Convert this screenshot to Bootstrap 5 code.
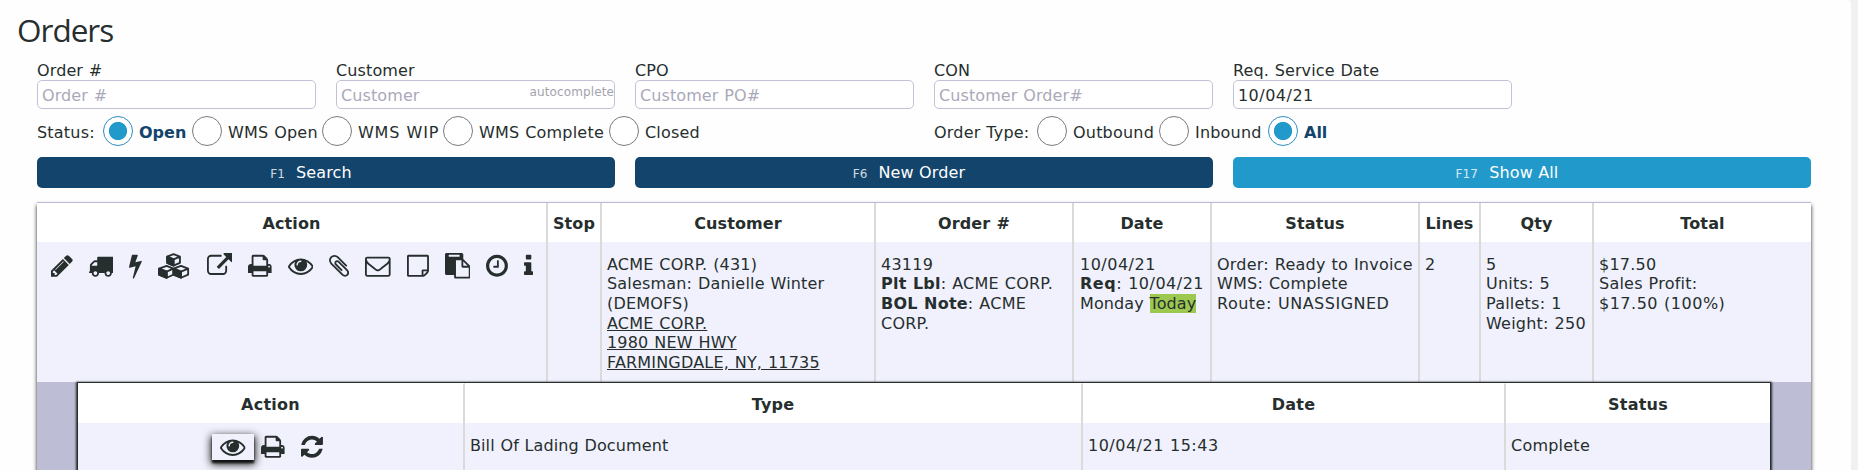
<!DOCTYPE html>
<html lang="en">
<head>
<meta charset="utf-8">
<title>Orders</title>
<link rel="stylesheet" href="https://cdn.jsdelivr.net/npm/bootstrap@5.3.0/dist/css/bootstrap.min.css">
<style>
html,body{height:470px;overflow:hidden}
body{background:#f1f0f3;color:#262e2e;font:16px/20px "DejaVu Sans",Verdana,sans-serif;word-spacing:.55px;letter-spacing:.12px}
.page{width:1851px;height:470px;background:#fefefe;padding:11px 40px 0 37px;border-top-right-radius:3px;overflow:hidden}
h1{font:400 31.5px/38px "Open Sans","Segoe UI",sans-serif;margin:0 0 12px -20px;letter-spacing:-1px}
.filters{--bs-gutter-x:20px}
.filters label.cap{display:block;height:19px;line-height:19px}
.form-control{height:29px;padding:1px 4px 0;border:1px solid #c3c1d6;border-radius:5px;font-size:16px;line-height:26px;color:#262e2e;background:#fff;word-spacing:.55px;letter-spacing:.1px}
.form-control::placeholder{color:#a9a9b9}
.hint{position:absolute;right:11px;top:23px;font-size:12px;line-height:16px;letter-spacing:.12px;color:#a3a3ad}
.choices{height:30px;margin-top:7px;letter-spacing:.2px}
.choices>*{flex:none;white-space:nowrap}
.choices span{padding-top:4px}
.choices .form-check-input{width:30px;height:30px;margin:0 6px 0 0;border:1px solid #777b80;background:#fff}
.choices .form-check-input:checked{border-color:#2e8cc0;background:radial-gradient(circle,#2299cb 8.7px,#fff 9.5px)}
.choices .form-check-input:checked+span{font-weight:700;color:#13446c;letter-spacing:0}
.btn-key{height:31px;width:100%;padding:1px 30px 0 0;border:0;border-radius:5px;color:#fff;background:#13446c;font-size:16px;line-height:30px;letter-spacing:.15px}
.btn-key.alt{background:#2299cb}
.btn-key kbd{all:unset;font-size:12px;margin-right:11px;opacity:.8}
.grid{table-layout:fixed;border-collapse:separate;border-spacing:0;margin:0}
.grid th{height:39px;padding:2px 0 0;text-align:center;background:#fff;border-right:2px solid #dadada;vertical-align:middle}
.grid td{background:#f0f1fc;border-right:2px solid #dadada;padding:12.5px 0 0 5px;vertical-align:top;line-height:19.7px;white-space:nowrap;letter-spacing:.23px}
.grid th:last-child,.grid td:last-child{border-right:0}
.outer{width:1774px;margin-top:14px;border-top:1px solid #b9b9d9;box-shadow:0 3px 4px #222}
.outer .main>td{height:140px}
.outer .main>.cust{padding-left:4px;letter-spacing:.18px}
.outer td.nest{background:#bdbed6;padding:1px 41px 0}
.inner{width:1692px;box-shadow:0 0 0 1px #262e2e,0 1px 2px 2px #262e2e}
.inner th{height:40px;padding:2px 0 0;border-top:1px solid #fff}
.inner td{height:80px}
td.acts{padding-left:6px!important;padding-top:11px!important}
.ico{display:inline-flex;padding:0 7.95px;height:25.6px}
.ico svg{height:25.6px;width:auto;fill:#262e2e;display:block}
.lift{box-shadow:0 3px 8px 1px #111,0 3px 2px #222}
.today{background:#9cc850;padding:0}
.num,.grid td.num{letter-spacing:.5px}
</style>
</head>
<body>
<svg width="0" height="0" class="position-absolute" aria-hidden="true">
<symbol id="i-eye" viewBox="0 0 1792 1792"><path d="M1664 960q-152-236-381-353 61 104 61 225 0 185-131.5 316.5t-316.5 131.5-316.5-131.5-131.5-316.5q0-121 61-225-229 117-381 353 133 205 333.5 326.5t434.5 121.5 434.5-121.5 333.5-326.5zm-720-384q0-20-14-34t-34-14q-125 0-214.5 89.5t-89.5 214.5q0 20 14 34t34 14 34-14 14-34q0-86 61-147t147-61q20 0 34-14t14-34zm848 384q0 34-20 69-140 230-376.5 368.5t-499.5 138.5-499.5-139-376.5-368q-20-35-20-69t20-69q140-229 376.5-368t499.5-139 499.5 139 376.5 368q20 35 20 69z"/></symbol>
<symbol id="i-print" viewBox="64 0 1664 1792"><path d="M448 1536h896v-256h-896v256zm0-640h896v-384h-160q-40 0-68-28t-28-68v-160h-640v640zm1152 64q0-26-19-45t-45-19-45 19-19 45 19 45 45 19 45-19 19-45zm128 0v416q0 13-9.5 22.5t-22.5 9.5h-224v160q0 40-28 68t-68 28h-960q-40 0-68-28t-28-68v-160h-224q-13 0-22.5-9.5t-9.5-22.5v-416q0-79 56.5-135.5t135.5-56.5h64v-544q0-40 28-68t68-28h672q40 0 88 20t76 48l152 152q28 28 48 76t20 88v256h64q79 0 135.5 56.5t56.5 135.5z"/></symbol>
</svg>
<main class="page">
<h1>Orders</h1>
<div class="row filters">
  <div class="col-2"><label class="cap">Order #</label><input class="form-control" placeholder="Order #"></div>
  <div class="col-2 position-relative"><label class="cap">Customer</label><input class="form-control" placeholder="Customer"><span class="hint">autocomplete</span></div>
  <div class="col-2"><label class="cap">CPO</label><input class="form-control" placeholder="Customer PO#"></div>
  <div class="col-2"><label class="cap">CON</label><input class="form-control" placeholder="Customer Order#"></div>
  <div class="col-2"><label class="cap">Req. Service Date</label><input class="form-control num" value="10/04/21"></div>
</div>
<div class="row filters">
  <div class="col-6"><div class="choices d-flex align-items-center">
    <span style="width:66px">Status:</span>
    <input class="form-check-input" type="radio" name="s" checked><span style="width:53px">Open</span>
    <input class="form-check-input" type="radio" name="s"><span style="width:94px">WMS Open</span>
    <input class="form-check-input" type="radio" name="s"><span style="width:85px;letter-spacing:.8px">WMS WIP</span>
    <input class="form-check-input" type="radio" name="s"><span style="width:130px">WMS Complete</span>
    <input class="form-check-input" type="radio" name="s"><span>Closed</span>
  </div></div>
  <div class="col-6"><div class="choices d-flex align-items-center">
    <span style="width:103px">Order Type:</span>
    <input class="form-check-input" type="radio" name="t"><span style="width:86px">Outbound</span>
    <input class="form-check-input" type="radio" name="t"><span style="width:73px">Inbound</span>
    <input class="form-check-input" type="radio" name="t" checked><span>All</span>
  </div></div>
</div>
<div class="row filters" style="margin-top:11px">
  <div class="col-4"><button class="btn btn-key"><kbd>F1</kbd>Search</button></div>
  <div class="col-4"><button class="btn btn-key"><kbd>F6</kbd>New Order</button></div>
  <div class="col-4"><button class="btn btn-key alt"><kbd>F17</kbd>Show All</button></div>
</div>
<table class="grid outer">
<colgroup><col style="width:511px"><col style="width:54px"><col style="width:274px"><col style="width:198px"><col style="width:138px"><col style="width:208px"><col style="width:61px"><col style="width:113px"><col style="width:217px"></colgroup>
<thead><tr><th>Action</th><th>Stop</th><th>Customer</th><th>Order #</th><th>Date</th><th>Status</th><th>Lines</th><th>Qty</th><th>Total</th></tr></thead>
<tbody>
<tr class="main">
<td class="acts"><div class="d-flex">
<span class="ico"><svg viewBox="128 0 1536 1792"><path d="M491 1536l91-91-235-235-91 91v107h128v128h107zm523-928q0-22-22-22-10 0-17 7l-542 542q-7 7-7 17 0 22 22 22 10 0 17-7l542-542q7-7 7-17zm-54-192l416 416-832 832h-416v-416zm683 96q0 53-37 90l-166 166-416-416 166-165q36-38 90-38 53 0 91 38l235 234q37 39 37 91z"/></svg></span>
<span class="ico"><svg viewBox="64 0 1728 1792"><path d="M640 1408q0-52-38-90t-90-38-90 38-38 90 38 90 90 38 90-38 38-90zm-384-512h384v-256h-158q-13 0-22 9l-195 195q-9 9-9 22v30zm1280 512q0-52-38-90t-90-38-90 38-38 90 38 90 90 38 90-38 38-90zm256-1088v1024q0 15-4 26.5t-13.5 18.5-16.5 11.5-23.5 6-22.5 2-25.5 0-22.5-.5q0 106-75 181t-181 75-181-75-75-181h-384q0 106-75 181t-181 75-181-75-75-181h-64q-3 0-22.5.5t-25.5 0-22.5-2-23.5-6-16.5-11.5-13.5-18.5-4-26.5q0-26 19-45t45-19v-320q0-8-.5-35t0-38 2.5-34.5 6.5-37 14-30.5 22.5-30l198-198q19-19 50.5-32t58.5-13h160v-192q0-26 19-45t45-19h1024q26 0 45 19t19 45z"/></svg></span>
<span class="ico"><svg viewBox="448 0 896 1792"><path d="M1333 566q18 20 7 44l-540 1157q-13 25-42 25-4 0-14-2-17-5-25.5-19t-4.5-30l197-808-406 101q-4 1-12 1-18 0-31-11-18-15-13-39l201-825q4-14 16-23t28-9h328q19 0 32 12.5t13 29.5q0 8-5 18l-171 463 396-98q8-2 12-2 19 0 34 15z"/></svg></span>
<span class="ico"><svg viewBox="0 0 2304 1792"><g stroke="#262e2e" stroke-width="128" stroke-linejoin="round"><path fill="none" d="M1088 75L1536 250V690L1088 885L640 690V250ZM640 250L1088 440L1536 250M1088 440V885M608 905L1070 1100V1520L608 1735L70 1520V1100ZM70 1100L608 1300L1070 1100M608 1300V1735M1610 905L2110 1100V1520L1610 1735L1090 1520V1100ZM1090 1100L1610 1300L2110 1100M1610 1300V1735"/><path d="M640 250L1088 440V885L640 690ZM70 1100L608 1300V1735L70 1520ZM1090 1100L1610 1300V1735L1090 1520Z"/></g></svg></span>
<span class="ico"><svg viewBox="0 0 1792 1792"><path d="M1408 928v320q0 119-84.5 203.5t-203.5 84.5h-832q-119 0-203.5-84.5t-84.5-203.5v-832q0-119 84.5-203.5t203.5-84.5h704q14 0 23 9t9 23v64q0 14-9 23t-23 9h-704q-66 0-113 47t-47 113v832q0 66 47 113t113 47h832q66 0 113-47t47-113v-320q0-14 9-23t23-9h64q14 0 23 9t9 23zm384-864v512q0 26-19 45t-45 19-45-19l-176-176-652 652q-10 10-23 10t-23-10l-114-114q-10-10-10-23t10-23l652-652-176-176q-19-19-19-45t19-45 45-19h512q26 0 45 19t19 45z"/></svg></span>
<span class="ico"><svg viewBox="0 0 1664 1792"><use href="#i-print" width="1664" height="1792"/></svg></span>
<span class="ico"><svg viewBox="0 0 1792 1792"><use href="#i-eye" width="1792" height="1792"/></svg></span>
<span class="ico"><svg viewBox="192 0 1408 1792"><path d="M1596 1385q0 117-79 196t-196 79q-135 0-235-100l-777-776q-113-115-113-271 0-159 110-270t269-111q158 0 273 113l605 606q10 10 10 22 0 16-30.5 46.5t-46.5 30.5q-13 0-23-10l-606-607q-79-77-181-77-106 0-179 75t-73 181q0 105 76 181l776 777q63 63 145 63 64 0 106-42t42-106q0-82-63-145l-581-581q-26-24-60-24-29 0-48 19t-19 48q0 32 25 59l410 410q10 10 10 22 0 16-31 47t-47 31q-12 0-22-10l-410-410q-63-61-63-149 0-82 57-139t139-57q88 0 149 63l581 581q100 98 100 235z"/></svg></span>
<span class="ico"><svg viewBox="0 0 1792 1792"><path d="M1664 1504v-768q-32 36-69 66-268 206-426 338-51 43-83 67t-86.5 48.5-102.5 24.5h-2q-48 0-102.5-24.5t-86.5-48.5-83-67q-158-132-426-338-37-30-69-66v768q0 13 9.5 22.5t22.5 9.5h1472q13 0 22.5-9.5t9.5-22.5zm0-1051v-24.5l-.5-13-3-12.5-5.5-9-9-7.5-14-2.5h-1472q-13 0-22.5 9.5t-9.5 22.5q0 168 147 284 193 152 401 317 6 5 35 29.5t46 37.5 44.5 31.5 50.5 27.5 43 9h2q20 0 43-9t50.5-27.5 44.5-31.5 46-37.5 35-29.5q208-165 401-317 54-43 100.5-115.5t46.5-131.5zm128-37v1088q0 66-47 113t-113 47h-1472q-66 0-113-47t-47-113v-1088q0-66 47-113t113-47h1472q66 0 113 47t47 113z"/></svg></span>
<span class="ico"><svg viewBox="0 0 1536 1792"><path d="M1400 1280h-248v248q29-10 41-22l185-185q12-12 22-41zm-280-128h288v-896h-1280v1280h896v-288q0-40 28-68t68-28zm416-928v1024q0 40-20 88t-48 76l-184 184q-28 28-76 48t-88 20h-1024q-40 0-68-28t-28-68v-1344q0-40 28-68t68-28h1344q40 0 68 28t28 68z"/></svg></span>
<span class="ico"><svg viewBox="0 0 1792 1792"><path d="M768 1664h896v-640h-416q-40 0-68-28t-28-68v-416h-384v1152zm256-1440v-64q0-13-9.5-22.5t-22.5-9.5h-704q-13 0-22.5 9.5t-9.5 22.5v64q0 13 9.5 22.5t22.5 9.5h704q13 0 22.5-9.5t9.5-22.5zm256 672h299l-299-299v299zm512 128v672q0 40-28 68t-68 28h-960q-40 0-68-28t-28-68v-160h-544q-40 0-68-28t-28-68v-1344q0-40 28-68t68-28h1088q40 0 68 28t28 68v328q21 13 36 28l408 408q28 28 48 76t20 88z"/></svg></span>
<span class="ico"><svg viewBox="128 0 1536 1792"><path d="M1024 544v448q0 14-9 23t-23 9h-320q-14 0-23-9t-9-23v-64q0-14 9-23t23-9h224v-352q0-14 9-23t23-9h64q14 0 23 9t9 23zm416 352q0-148-73-273t-198-198-273-73-273 73-198 198-73 273 73 273 198 198 273 73 273-73 198-198 73-273zm224 0q0 209-103 385.5t-279.5 279.5-385.5 103-385.5-103-279.5-279.5-103-385.5 103-385.5 279.5-279.5 385.5-103 385.5 103 279.5 279.5 103 385.5z"/></svg></span>
<span class="ico"><svg viewBox="576 0 640 1792"><path d="M1216 1344v128q0 26-19 45t-45 19h-512q-26 0-45-19t-19-45v-128q0-26 19-45t45-19h64v-384h-64q-26 0-45-19t-19-45v-128q0-26 19-45t45-19h384q26 0 45 19t19 45v576h64q26 0 45 19t19 45zm-128-1152v192q0 26-19 45t-45 19h-256q-26 0-45-19t-19-45v-192q0-26 19-45t45-19h256q26 0 45 19t19 45z"/></svg></span>
</div></td>
<td></td>
<td class="cust" style="padding-left:5px">ACME CORP. (431)<br>Salesman: Danielle Winter<br>(DEMOFS)<br><u>ACME CORP.</u><br><u>1980 NEW HWY</u><br><u>FARMINGDALE, NY, 11735</u></td>
<td>43119<br><b>Plt Lbl</b>: ACME CORP.<br><b>BOL Note</b>: ACME<br>CORP.</td>
<td style="padding-left:6px"><span class="num">10/04/21</span><br><span class="num"><b>Req</b>: 10/04/21</span><br><span style="letter-spacing:.1px">Monday <span class="today">Today</span></span></td>
<td>Order: Ready to Invoice<br>WMS: Complete<br><span style="letter-spacing:.5px">Route: UNASSIGNED</span></td>
<td>2</td>
<td>5<br>Units: 5<br>Pallets: 1<br>Weight: 250</td>
<td>$17.50<br>Sales Profit:<br><span class="num">$17.50 (100%)</span></td>
</tr>
<tr><td class="nest" colspan="9">
<table class="grid inner">
<colgroup><col style="width:387px"><col style="width:618px"><col style="width:423px"><col style="width:264px"></colgroup>
<thead><tr><th>Action</th><th>Type</th><th>Date</th><th>Status</th></tr></thead>
<tbody><tr>
<td class="acts"><div class="d-flex justify-content-center pe-1">
<span class="ico lift"><svg viewBox="0 0 1792 1792"><use href="#i-eye" width="1792" height="1792"/></svg></span>
<span class="ico"><svg viewBox="0 0 1664 1792"><use href="#i-print" width="1664" height="1792"/></svg></span>
<span class="ico"><svg viewBox="128 0 1536 1792"><path d="M1639 1056q0 5-1 7-64 268-268 434.5t-478 166.5q-146 0-282.5-55t-243.5-157l-129 129q-19 19-45 19t-45-19-19-45v-448q0-26 19-45t45-19h448q26 0 45 19t19 45-19 45l-137 137q71 66 161 102t187 36q134 0 250-65t186-179q11-17 53-117 8-23 30-23h192q13 0 22.5 9.5t9.5 22.5zm25-800v448q0 26-19 45t-45 19h-448q-26 0-45-19t-19-45 19-45l138-138q-148-137-349-137-134 0-250 65t-186 179q-11 17-53 117-8 23-30 23h-199q-13 0-22.5-9.5t-9.5-22.5v-7q65-268 270-434.5t480-166.5q146 0 284 55.5t245 156.5l130-129q19-19 45-19t45 19 19 45z"/></svg></span>
</div></td>
<td style="letter-spacing:.1px">Bill Of Lading Document</td><td class="num">10/04/21 15:43</td><td>Complete</td>
</tr></tbody></table>
</td></tr>
</tbody></table>
</main>
<script src="https://cdn.jsdelivr.net/npm/bootstrap@5.3.0/dist/js/bootstrap.bundle.min.js"></script>
</body>
</html>
